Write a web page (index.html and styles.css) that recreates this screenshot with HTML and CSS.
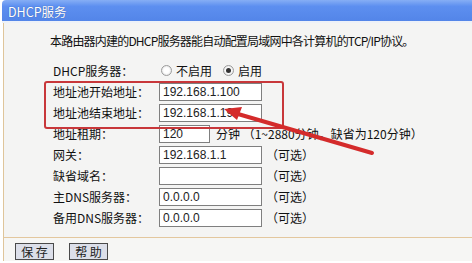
FILE: index.html
```html
<!DOCTYPE html>
<html lang="zh-CN">
<head>
  <meta charset="UTF-8" />
  <meta name="viewport" content="width=device-width, initial-scale=1.0" />
  <title>DHCP服务</title>
  <link rel="stylesheet" href="styles.css">
</head>
<body>
  <div class="page">
    <div class="titlebar">DHCP服务</div>

    <div class="panel">
      <p class="intro">本路由器内建的DHCP服务器能自动配置局域网中各计算机的TCP/IP协议。</p>

      <div class="form">
        <div class="row">
          <span class="label">DHCP服务器：</span>
          <div class="field">
            <span class="radio"></span><span class="radio-text">不启用</span>
            <span class="radio checked"></span><span class="radio-text">启用</span>
          </div>
        </div>
        <div class="row">
          <span class="label">地址池开始地址：</span>
          <input class="box" type="text" value="192.168.1.100" readonly>
        </div>
        <div class="row">
          <span class="label">地址池结束地址：</span>
          <input class="box" type="text" value="192.168.1.199" readonly>
        </div>
        <div class="row">
          <span class="label">地址租期：</span>
          <input class="box short" type="text" value="120" readonly>
          <span class="note">分钟 （1~2880分钟，缺省为120分钟）</span>
        </div>
        <div class="row">
          <span class="label">网关：</span>
          <input class="box" type="text" value="192.168.1.1" readonly>
          <span class="hint">（可选）</span>
        </div>
        <div class="row">
          <span class="label">缺省域名：</span>
          <input class="box" type="text" value="" readonly>
          <span class="hint">（可选）</span>
        </div>
        <div class="row">
          <span class="label">主DNS服务器：</span>
          <input class="box" type="text" value="0.0.0.0" readonly>
          <span class="hint">（可选）</span>
        </div>
        <div class="row">
          <span class="label">备用DNS服务器：</span>
          <input class="box" type="text" value="0.0.0.0" readonly>
          <span class="hint">（可选）</span>
        </div>
      </div>
    </div>

    <div class="actions">
      <button class="btn">保 存</button>
      <button class="btn">帮 助</button>
    </div>

    <!-- red markup drawn over the form -->
    <svg class="annotations" width="472" height="263" viewBox="0 0 472 263">
      <rect x="45" y="82" width="238" height="46" rx="2" fill="none" stroke="#c8373a" stroke-width="2"/>
      <line x1="372" y1="153" x2="238" y2="114" stroke="#d42b2b" stroke-width="4" stroke-linecap="round"/>
      <polygon points="224,109 242,107 237,120" fill="#d42b2b"/>
    </svg>
  </div>
</body>
</html>
```

FILE: styles.css
```css
* {
  margin: 0;
  padding: 0;
  box-sizing: border-box;
}

body {
  background: #fff;
  font-family: "Noto Sans CJK SC", "Liberation Sans", sans-serif;
  font-size: 12px;
  color: #111;
}

.page {
  position: relative;
  width: 472px;
  height: 263px;
  overflow: hidden;
}

.titlebar {
  margin-left: 2px;
  height: 23px;
  line-height: 23px;
  padding-left: 6px;
  border-radius: 4px 0 0 0;
  background: linear-gradient(#86aef5, #5d8ff0 30%, #5385e8);
  color: #fff;
  font-size: 12.5px;
  text-shadow: 0 0 1px #2c4f9a;
  border-bottom: 2px solid #edf1f8;
}

.panel {
  margin-left: 3px;
  border-left: 1px solid #dfc59a;
  border-bottom: 1px solid #e3c79e;
  background: #f4f4f3;
}

.intro {
  padding: 10px 0 0 46px;
  line-height: 16px;
  letter-spacing: -0.8px;
}

.form {
  padding: 11px 0 9px 49px;
}

.row {
  display: flex;
  align-items: center;
  height: 21px;
}

.label {
  width: 106px;
  flex-shrink: 0;
}

.field {
  display: flex;
  align-items: center;
}

.radio {
  width: 11px;
  height: 11px;
  margin-left: 2px;
  border-radius: 50%;
  border: 1px solid #9c9c9c;
  background: radial-gradient(circle, #fff 40%, #d6d6d6);
  display: flex;
  align-items: center;
  justify-content: center;
}

.radio.checked::after {
  content: "";
  width: 5px;
  height: 5px;
  border-radius: 50%;
  background: #333;
}

.radio-text {
  margin-left: 4px;
  margin-right: 9px;
}

.box {
  width: 103px;
  height: 18px;
  padding: 0 3px;
  border: 1px solid #7f7f7f;
  background: #fff;
  font-family: "Liberation Sans", sans-serif;
  font-size: 12px;
  color: #222;
  outline: none;
}

.box.short {
  width: 51px;
}

.note {
  margin-left: 6px;
}

.hint {
  margin-left: 4px;
}

.actions {
  margin-left: 3px;
  border-left: 1px solid #dfc59a;
  background: #f6f6f4;
  height: 23px;
  padding: 5px 0 0 11px;
  display: flex;
  gap: 15px;
}

.btn {
  width: 39px;
  height: 17px;
  border: 1px solid #4a4a4a;
  background: #dcdfe9;
  font-family: "Noto Sans CJK SC", sans-serif;
  font-size: 12px;
  line-height: 15px;
  color: #222;
  white-space: pre;
}

.annotations {
  position: absolute;
  top: 0;
  left: 0;
  pointer-events: none;
}
```
